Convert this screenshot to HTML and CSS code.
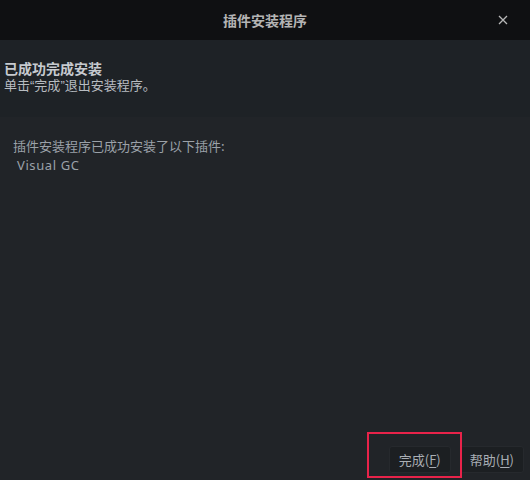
FILE: index.html
```html
<!DOCTYPE html>
<html lang="zh">
<head>
<meta charset="utf-8">
<link rel="stylesheet" href="styles.css">
</head>
<body>
<div class="window">
  <div class="titlebar">
    <div class="title">插件安装程序</div>
    <div class="close">
      <svg width="10" height="10" viewBox="0 0 10 10"><path d="M1 1L9 9M9 1L1 9" stroke="#b8b8b8" stroke-width="1.3" fill="none"/></svg>
    </div>
  </div>
  <div class="header">
    <div class="h-title">已成功完成安装</div>
    <div class="h-sub">单击<span class="q">“</span>完成<span class="q">”</span>退出安装程序。</div>
  </div>
  <div class="content">
    <div class="msg">插件安装程序已成功安装了以下插件:</div>
    <div class="plugin">Visual GC</div>
  </div>
  <div class="footer">
    <div class="btn">完成(<u>F</u>)</div>
    <div class="btn">帮助(<u>H</u>)</div>
    <div class="highlight"></div>
  </div>
</div>
</body>
</html>
```
FILE: styles.css
```css
html, body {
  margin: 0;
  padding: 0;
  background: #212428;
}
body {
  font-family: "Noto Sans CJK SC", "Noto Sans", sans-serif;
}
.window {
  width: 530px;
  height: 480px;
  display: flex;
  flex-direction: column;
  background: #212428;
  position: relative;
}
.titlebar {
  height: 40px;
  background: #0f1012;
  display: flex;
  align-items: center;
  justify-content: center;
  position: relative;
  flex-shrink: 0;
}
.title {
  color: #b4b4b4;
  font-size: 14px;
  font-weight: bold;
}
.close {
  position: absolute;
  right: 22px;
  top: 15px;
  width: 10px;
  height: 10px;
  display: flex;
}
.header {
  height: 77px;
  background: #1e2226;
  box-sizing: border-box;
  padding: 20px 0 0 4px;
  flex-shrink: 0;
}
.h-title {
  color: #c6cacf;
  font-size: 14px;
  font-weight: bold;
  line-height: 17px;
}
.h-sub {
  color: #b8bcc1;
  font-size: 13px;
  line-height: 16px;
}
.q {
  font-family: "Liberation Sans", sans-serif;
}
.content {
  flex: 1;
  padding: 20px 0 0 13px;
}
.msg {
  color: #9ba1a8;
  font-size: 13px;
  line-height: 18px;
}
.plugin {
  color: #9ba1a8;
  font-size: 13px;
  line-height: 20px;
  padding-left: 4px;
  font-family: "Noto Sans", sans-serif;
  letter-spacing: 0.6px;
}
.footer {
  height: 48px;
  display: flex;
  justify-content: flex-end;
  align-items: flex-start;
  gap: 9px;
  padding: 0 6px 0 0;
  position: relative;
  flex-shrink: 0;
}
.btn {
  height: 27px;
  box-sizing: border-box;
  padding: 0 9px;
  border: 1px solid #26292d;
  border-radius: 3px;
  background: #1c1f22;
  color: #a9aeb4;
  font-size: 13px;
  display: flex;
  align-items: center;
  margin-top: 14px;
}
.btn u {
  text-underline-offset: 2px;
}
.highlight {
  position: absolute;
  left: 367px;
  top: 0;
  width: 91px;
  height: 42px;
  border: 2px solid #e8234a;
}
```
